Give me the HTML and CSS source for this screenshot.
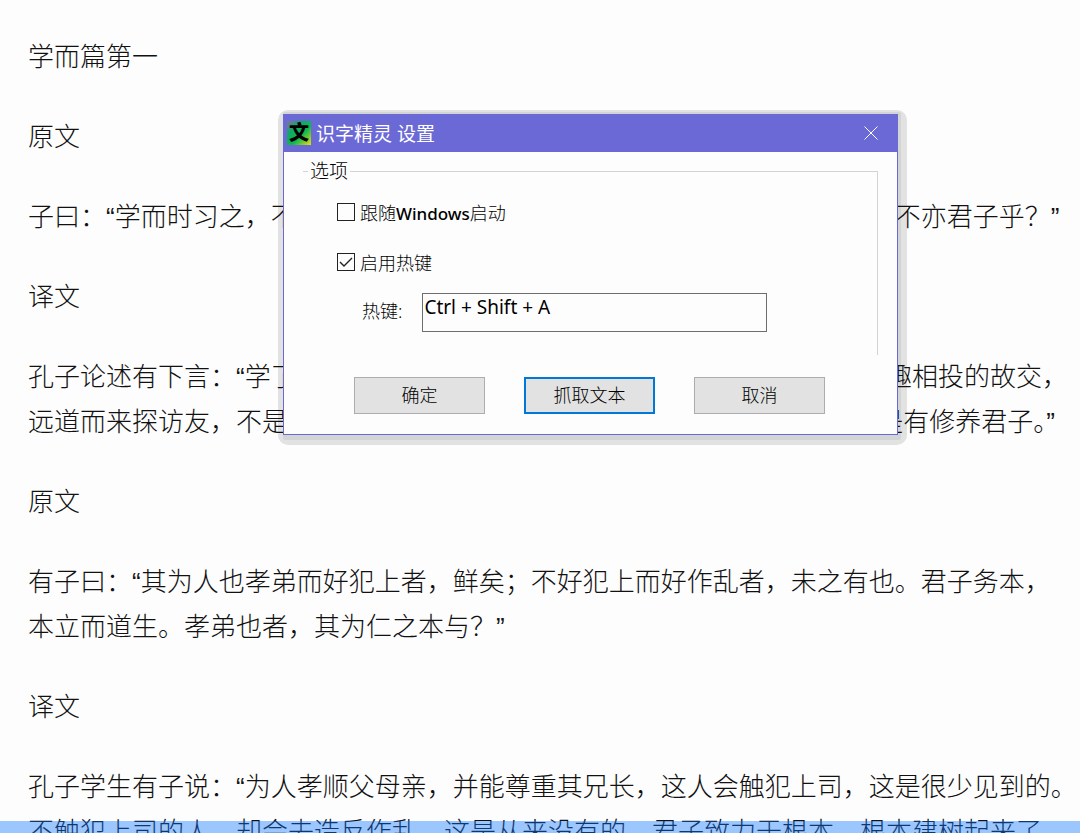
FILE: index.html
```
<!DOCTYPE html>
<html lang="zh-CN">
<head>
  <meta charset="UTF-8" />
  <title>识字精灵 设置</title>
  <meta name="viewport" content="width=device-width, initial-scale=1" />
  <link rel="stylesheet" href="styles.css">
</head>
<body>

<main class="document">
  <p>学而篇第一</p>
  <p>原文</p>
  <p>子曰：“学而时习之，不亦说乎？有朋自远方来，不亦乐乎？人不知而不愠，不亦君子乎？”</p>
  <p>译文</p>
  <p>孔子论述有下言：“学了知识以后又能时常去“温习”，不也是很愉快吗？有志趣相投的故交，<br>远道而来探访友，不是很快乐吗？别人不了解自己也不“怨恨”，这才真的算是有修养君子。”</p>
  <p>原文</p>
  <p>有子曰：“其为人也孝弟而好犯上者，鲜矣；不好犯上而好作乱者，未之有也。君子务本，<br>本立而道生。孝弟也者，其为仁之本与？”</p>
  <p>译文</p>
  <p>孔子学生有子说：“为人孝顺父母亲，并能尊重其兄长，这人会触犯上司，这是很少见到的。<br>不触犯上司的人，却会去造反作乱，这是从来没有的。君子致力于根本，根本建树起来了</p>
</main>

<div class="selection"></div>

<form class="dialog" role="dialog" aria-labelledby="dialogTitle">
  <header class="titlebar">
    <span class="app-icon">文</span>
    <span class="title" id="dialogTitle">识字精灵 设置</span>
    <button type="button" class="close" aria-label="关闭">
      <svg width="14" height="14" viewBox="0 0 14 14"><path d="M0.5 0.5L13.5 13.5M13.5 0.5L0.5 13.5" /></svg>
    </button>
  </header>

  <fieldset class="options">
    <legend>选项</legend>
    <label class="check"><input type="checkbox" id="autostart"><span>跟随<b>Windows</b>启动</span></label>
    <label class="check"><input type="checkbox" id="useHotkey" checked><span>启用热键</span></label>
    <div class="hotkey">
      <label for="hotkey">热键:</label>
      <input type="text" id="hotkey" value="Ctrl + Shift + A">
    </div>
  </fieldset>

  <div class="buttons">
    <button type="button">确定</button>
    <button type="button" class="default">抓取文本</button>
    <button type="button">取消</button>
  </div>
</form>

</body>
</html>
```
FILE: styles.css
```
* {
  box-sizing: border-box;
}
body {
  margin: 0;
  height: 100vh;
  overflow: hidden;
  position: relative;
  background: #fdfdfd;
  color: #111;
  font-family: "Liberation Sans", "Noto Sans CJK SC", sans-serif;
}
.document {
  padding: 35px 0 0 28px;
  font-size: 26px;
  font-weight: 300;
  line-height: 45px;
  white-space: nowrap;
}
.document p {
  margin: 0 0 35px;
}
.selection {
  position: absolute;
  left: 0;
  right: 0;
  bottom: 0;
  height: 12px;
  background: rgba(10, 115, 255, 0.4);
}

/* settings window */
.dialog {
  position: absolute;
  left: 283px;
  top: 114px;
  width: 615px;
  padding: 0 0 20px;
  background: #fdfdfd;
  border: 1px solid #6b69d6;
  border-top: none;
  color: #000;
  font-family: "Noto Sans", "Noto Sans CJK SC", sans-serif;
  font-size: 18px;
  font-weight: 300;
}
/* two-step shadow, kept under the page text */
.dialog::before,
.dialog::after {
  content: "";
  position: absolute;
  z-index: -1;
}
.dialog::before {
  inset: -4px -10px -11px -6px;
  border-radius: 10px;
  background: #e2e2e2;
}
.dialog::after {
  inset: -2px -4px -6px -1px;
  border-radius: 2px;
  background: #d3d5d4;
}
.titlebar {
  display: flex;
  align-items: center;
  height: 38px;
  padding: 0 20px 0 3px;
  margin: 0 -1px;
  background: #6b69d6;
  color: #fff;
}
.app-icon {
  width: 24px;
  height: 24px;
  margin: 0 5px 0 1px;
  background: linear-gradient(135deg, #8a6aa8, #10a868 30%, #10b850 60%, #e8e010);
  color: #000;
  font-size: 20px;
  font-weight: 900;
  line-height: 23px;
  text-align: center;
}
.title {
  flex: 1;
  font-size: 19px;
  font-weight: 400;
}
.close {
  display: flex;
  padding: 0;
  border: none;
  background: none;
}
.close svg {
  stroke: #fff;
  fill: none;
}
.options {
  height: 196px;
  margin: 7px 19px 0;
  padding: 17px 0 0 34px;
  border: 0 solid #d3d3d3;
  border-width: 1px 1px 0 0;
}
.options legend {
  margin-left: -29px;
  padding: 0 2px;
  font-size: 19px;
  line-height: 24px;
}
.check {
  display: flex;
  align-items: center;
  gap: 5px;
  height: 24px;
  margin-bottom: 26px;
}
.check b {
  font-size: 17px;
  font-weight: 500;
}
.check input {
  appearance: none;
  width: 18px;
  height: 18px;
  margin: 0;
  border: 1px solid #222;
}
.check input:checked {
  background: url("data:image/svg+xml,%3Csvg xmlns='http://www.w3.org/2000/svg' viewBox='0 0 16 16'%3E%3Cpath d='M2 8L6 12L14 4' fill='none' stroke='%23222' stroke-width='1.4'/%3E%3C/svg%3E");
}
.hotkey {
  display: flex;
  align-items: center;
  gap: 20px;
  margin: -7px 0 0 25px;
}
.hotkey label {
  padding-bottom: 6px;
}
.hotkey input {
  width: 345px;
  height: 39px;
  padding: 0 1px 11px;
  border: 1px solid #6e6e6e;
  background: #fdfdfd;
  color: #000;
  font-family: "Noto Sans", sans-serif;
  font-size: 19px;
}
.buttons {
  display: flex;
  gap: 39px;
  margin: 22px 0 0 70px;
}
.buttons button {
  width: 131px;
  height: 37px;
  padding: 0 0 3px;
  border: 1px solid #adadad;
  background: #e2e2e2;
  color: #000;
  font: inherit;
}
.buttons .default {
  border: 2px solid #0078d7;
}
```
